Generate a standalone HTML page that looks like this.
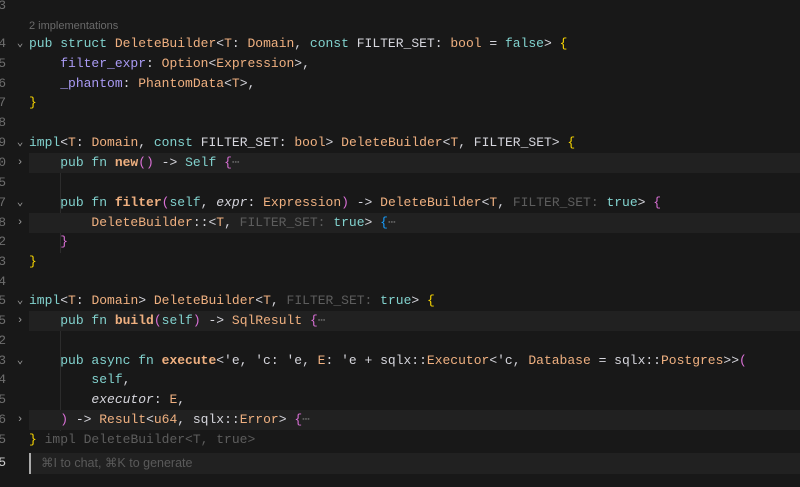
<!DOCTYPE html>
<html><head><meta charset="utf-8"><style>
body{margin:0;width:800px;height:487px;background:#181818;overflow:hidden;position:relative;font-family:"Liberation Mono",monospace;font-size:13px;color:#d6d6dd}
.l{position:absolute;left:29px;right:0;height:20px;line-height:20px;white-space:pre}
.f{background:#212121}
.n{position:absolute;left:-8px;width:14px;text-align:right;height:20px;line-height:20px;color:#6e6e6e;font-size:13px}
.c{position:absolute;left:15px;width:10px;height:20px;line-height:20px;color:#9a9a9a;font-size:11px;text-align:center}
.k{color:#82d2ce}.t{color:#efb080}.p{color:#aa9bf5}.fn{color:#efb080;font-weight:bold}
.y{color:#fad700}.m{color:#da70d6}.b{color:#179fff}.h{color:#5d5d5d}.i{font-style:italic}
.g{position:absolute;width:1px;background:#2c2c2c}
</style></head><body>
<div class="g" style="left:60px;top:153px;height:100px"></div>
<div class="g" style="left:60px;top:311px;height:120px"></div>

<div class="n" style="top:-4px">3</div>
<div class="l" style="top:16px;font-family:'Liberation Sans',sans-serif;font-size:11px;color:#6a6a6a">2 implementations</div>

<div class="n" style="top:34px">4</div><div class="c" style="top:34px">⌄</div>
<div class="l" style="top:34px"><span class="k">pub struct </span><span class="t">DeleteBuilder</span>&lt;<span class="t">T</span>: <span class="t">Domain</span>, <span class="k">const</span> FILTER_SET: <span class="t">bool</span> = <span class="k">false</span>&gt; <span class="y">{</span></div>
<div class="n" style="top:54px">5</div>
<div class="l" style="top:54px">    <span class="p">filter_expr</span>: <span class="t">Option</span>&lt;<span class="t">Expression</span>&gt;,</div>
<div class="n" style="top:74px">6</div>
<div class="l" style="top:74px">    <span class="p">_phantom</span>: <span class="t">PhantomData</span>&lt;<span class="t">T</span>&gt;,</div>
<div class="n" style="top:93px">7</div>
<div class="l" style="top:93px"><span class="y">}</span></div>
<div class="n" style="top:113px">8</div>

<div class="n" style="top:133px">9</div><div class="c" style="top:133px">⌄</div>
<div class="l" style="top:133px"><span class="k">impl</span>&lt;<span class="t">T</span>: <span class="t">Domain</span>, <span class="k">const</span> FILTER_SET: <span class="t">bool</span>&gt; <span class="t">DeleteBuilder</span>&lt;<span class="t">T</span>, FILTER_SET&gt; <span class="y">{</span></div>
<div class="n" style="top:153px">0</div><div class="c" style="top:153px">›</div>
<div class="l f" style="top:153px">    <span class="k">pub fn </span><span class="fn">new</span><span class="m">()</span> -&gt; <span class="k">Self</span> <span class="m">{</span><span class="h">⋯</span></div>
<div class="n" style="top:173px">5</div>
<div class="n" style="top:193px">7</div><div class="c" style="top:193px">⌄</div>
<div class="l" style="top:193px">    <span class="k">pub fn </span><span class="fn">filter</span><span class="m">(</span><span class="k">self</span>, <span class="i">expr</span>: <span class="t">Expression</span><span class="m">)</span> -&gt; <span class="t">DeleteBuilder</span>&lt;<span class="t">T</span>, <span class="h">FILTER_SET:</span> <span class="k">true</span>&gt; <span class="m">{</span></div>
<div class="n" style="top:213px">8</div><div class="c" style="top:213px">›</div>
<div class="l f" style="top:213px">        <span class="t">DeleteBuilder</span>::&lt;<span class="t">T</span>, <span class="h">FILTER_SET:</span> <span class="k">true</span>&gt; <span class="b">{</span><span class="h">⋯</span></div>
<div class="n" style="top:232px">2</div>
<div class="l" style="top:232px">    <span class="m">}</span></div>
<div class="n" style="top:252px">3</div>
<div class="l" style="top:252px"><span class="y">}</span></div>
<div class="n" style="top:272px">4</div>

<div class="n" style="top:291px">5</div><div class="c" style="top:291px">⌄</div>
<div class="l" style="top:291px"><span class="k">impl</span>&lt;<span class="t">T</span>: <span class="t">Domain</span>&gt; <span class="t">DeleteBuilder</span>&lt;<span class="t">T</span>, <span class="h">FILTER_SET:</span> <span class="k">true</span>&gt; <span class="y">{</span></div>
<div class="n" style="top:311px">5</div><div class="c" style="top:311px">›</div>
<div class="l f" style="top:311px">    <span class="k">pub fn </span><span class="fn">build</span><span class="m">(</span><span class="k">self</span><span class="m">)</span> -&gt; <span class="t">SqlResult</span> <span class="m">{</span><span class="h">⋯</span></div>
<div class="n" style="top:331px">2</div>
<div class="n" style="top:351px">3</div><div class="c" style="top:351px">⌄</div>
<div class="l" style="top:351px">    <span class="k">pub async fn </span><span class="fn">execute</span>&lt;'e, 'c: 'e, <span class="t">E</span>: 'e + sqlx::<span class="t">Executor</span>&lt;'c, <span class="t">Database</span> = sqlx::<span class="t">Postgres</span>&gt;&gt;<span class="m">(</span></div>
<div class="n" style="top:370px">4</div>
<div class="l" style="top:370px">        <span class="k">self</span>,</div>
<div class="n" style="top:390px">5</div>
<div class="l" style="top:390px">        <span class="i">executor</span>: <span class="t">E</span>,</div>
<div class="n" style="top:410px">6</div><div class="c" style="top:410px">›</div>
<div class="l f" style="top:410px">    <span class="m">)</span> -&gt; <span class="t">Result</span>&lt;<span class="t">u64</span>, sqlx::<span class="t">Error</span>&gt; <span class="m">{</span><span class="h">⋯</span></div>
<div class="n" style="top:430px">5</div>
<div class="l" style="top:430px"><span class="y">}</span> <span class="h">impl DeleteBuilder&lt;T, true&gt;</span></div>
<div class="n" style="top:453px;color:#ccc">5</div>
<div class="l f" style="top:453px;height:21px;line-height:21px;border-left:2px solid #aaa;left:29px;padding-left:10px;font-family:'Liberation Sans',sans-serif;font-size:12.5px;color:#5a5a5a">⌘I to chat, ⌘K to generate</div>
</body></html>
